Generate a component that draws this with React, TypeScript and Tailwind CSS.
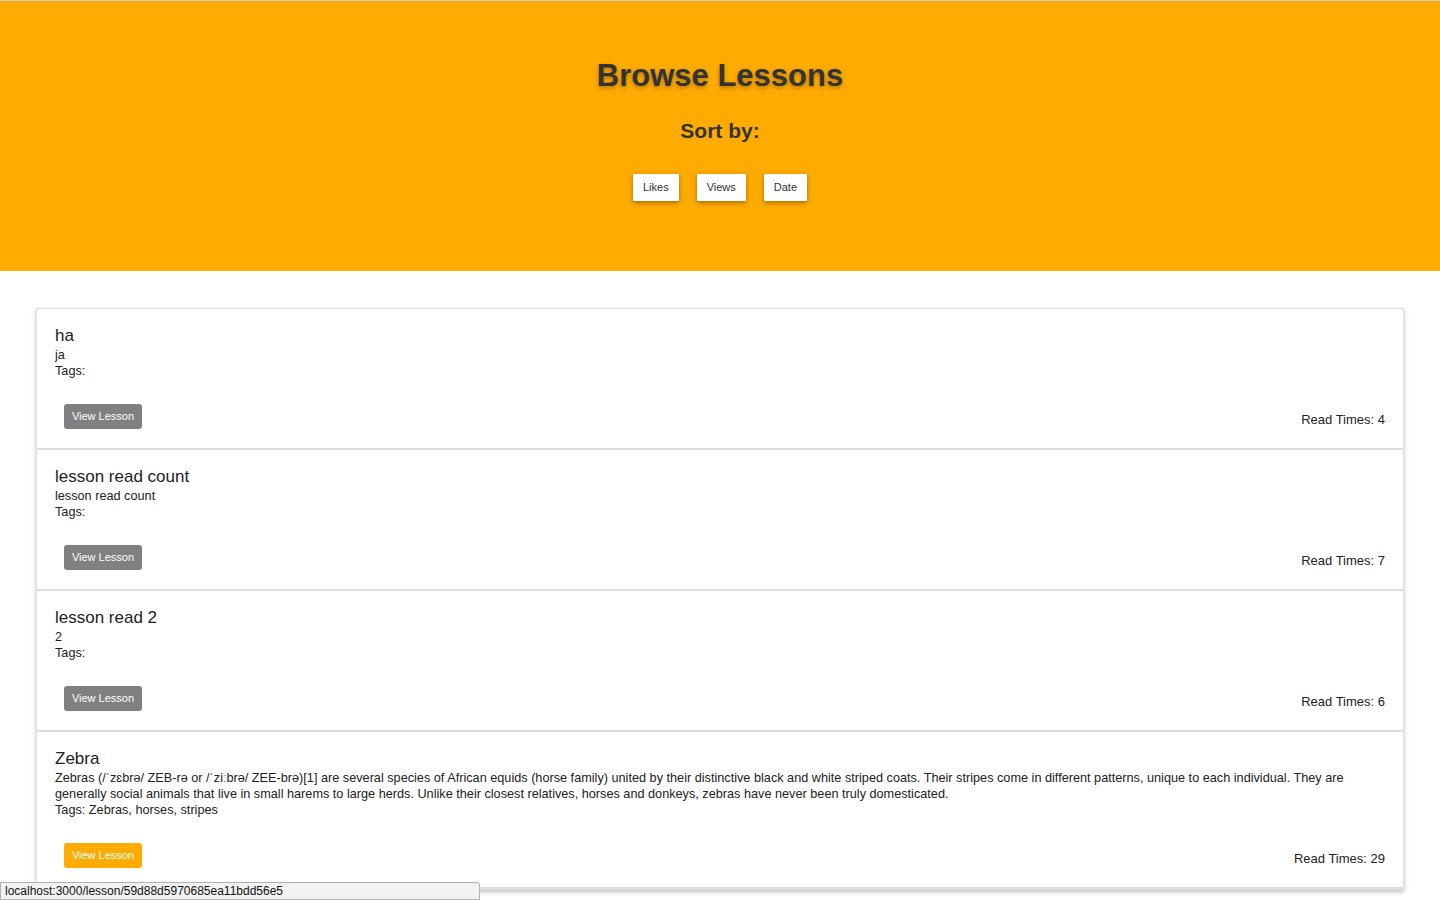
import React from "react";

type Lesson = {
  title: string;
  body: string;
  tags: string;
  reads: number;
  active?: boolean;
};

const lessons: Lesson[] = [
  { title: "ha", body: "ja", tags: "", reads: 4 },
  { title: "lesson read count", body: "lesson read count", tags: "", reads: 7 },
  { title: "lesson read 2", body: "2", tags: "", reads: 6 },
  {
    title: "Zebra",
    body: "Zebras (/ˈzɛbrə/ ZEB-rə or /ˈziːbrə/ ZEE-brə)[1] are several species of African equids (horse family) united by their distinctive black and white striped coats. Their stripes come in different patterns, unique to each individual. They are generally social animals that live in small harems to large herds. Unlike their closest relatives, horses and donkeys, zebras have never been truly domesticated.",
    tags: "Zebras, horses, stripes",
    reads: 29,
    active: true,
  },
];

const SortButton: React.FC<{ label: string }> = ({ label }) => (
  <button className="h-[27px] bg-white px-[10px] text-[11px] text-[#333] shadow-[0_2px_5px_rgba(0,0,0,0.35)]">
    {label}
  </button>
);

const LessonItem: React.FC<{ lesson: Lesson }> = ({ lesson }) => (
  <div className="border-b-2 border-[#dddddd] px-[18px] pt-[16px] pb-[19px]">
    <h3 className="text-[17px] leading-[22px] font-medium text-[#222]">{lesson.title}</h3>
    <p className="text-[12.7px] leading-[16px] text-[#222]">{lesson.body}</p>
    <p className="text-[12.7px] leading-[16px] text-[#222]">Tags: {lesson.tags}</p>
    <div className="mt-[25px] flex items-end justify-between pl-[9px]">
      <button
        className={`h-[25px] w-[78px] rounded-[3px] text-[11px] text-white ${
          lesson.active ? "bg-[#ffab00]" : "bg-[#808080]"
        }`}
      >
        View Lesson
      </button>
      <span className="mb-[1px] text-[13px] leading-[16px] text-[#222]">
        Read Times: {lesson.reads}
      </span>
    </div>
  </div>
);

export default function App() {
  return (
    <div className="min-h-[900px] bg-white font-['Liberation_Sans',Arial,sans-serif]">
      <div className="border-t border-[#cccccc] bg-[#ffab00] pt-[55px] pb-[70px] text-center">
        <h1 className="text-[31px] leading-[40px] font-bold text-[#333] [text-shadow:0_2px_4px_rgba(0,0,0,0.3)]">
          Browse Lessons
        </h1>
        <h2 className="mt-[21px] text-[21px] leading-[28px] font-bold text-[#333]">
          Sort by:
        </h2>
        <div className="mt-[29px] flex justify-center gap-[18px]">
          <SortButton label="Likes" />
          <SortButton label="Views" />
          <SortButton label="Date" />
        </div>
      </div>

      <div className="mx-[36px] mt-[37px] border border-[#e0e0e0] bg-white shadow-[0_2px_4px_rgba(0,0,0,0.25)]">
        {lessons.map((l) => (
          <LessonItem key={l.title} lesson={l} />
        ))}
      </div>

      <div className="fixed bottom-0 left-0 h-[18px] w-[480px] rounded-tr-[3px] border border-[#b0b0b0] bg-[#f2f2f2] pl-[4px] text-[12px] leading-[16px] text-[#111]">
        localhost:3000/lesson/59d88d5970685ea11bdd56e5
      </div>
    </div>
  );
}
